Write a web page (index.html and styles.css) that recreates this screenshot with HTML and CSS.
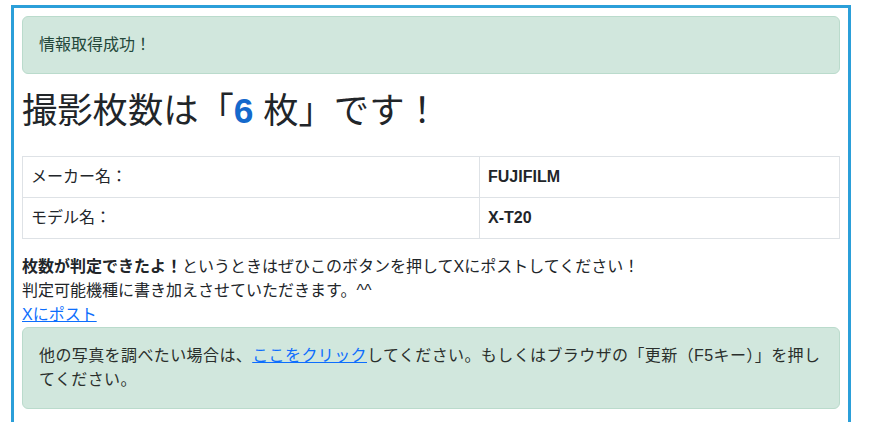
FILE: index.html
```html
<!DOCTYPE html>
<html lang="ja">
<head>
<meta charset="utf-8">
<title>撮影枚数</title>
<link rel="stylesheet" href="styles.css">
</head>
<body>
<div class="frame">
  <div class="alert alert-top">情報取得成功！</div>
  <h1 class="title">撮影枚数は「<span class="count">6</span> 枚」です！</h1>
  <table class="info">
    <tr><td class="label">メーカー名：</td><td class="value">FUJIFILM</td></tr>
    <tr><td class="label">モデル名：</td><td class="value">X-T20</td></tr>
  </table>
  <p class="note"><b>枚数が判定できたよ！</b>というときはぜひこのボタンを押してXにポストしてください！<br>判定可能機種に書き加えさせていただきます。^^<br><a href="#" class="link">Xにポスト</a></p>
  <div class="alert alert-bottom">他の写真を調べたい場合は、<a href="#" class="link">ここをクリック</a>してください。もしくはブラウザの「更新（F5キー）」を押してください。</div>
</div>
</body>
</html>
```
FILE: styles.css
```css
html, body {
  margin: 0;
  padding: 0;
  background: #fff;
}
body {
  font-family: "Liberation Sans", "Noto Sans CJK JP", sans-serif;
  font-size: 16px;
  line-height: 24px;
  color: #212529;
}
.frame {
  box-sizing: border-box;
  width: 840px;
  min-height: 440px;
  margin: 5px 0 0 11px;
  border: 3px solid #2b9fd9;
  padding: 8px;
}
.alert {
  background: #d1e7dd;
  border: 1px solid #badbcc;
  border-radius: 6px;
  padding: 16px;
}
.alert-top {
  color: #24473a;
  margin-bottom: 16px;
}
.alert-bottom {
  color: #2a2f2c;
  letter-spacing: 0.4px;
}
.title {
  margin: 0 0 24px 0;
  font-size: 35.3px;
  line-height: 42.4px;
  font-weight: 400;
  color: #212529;
}
.count {
  color: #1469cc;
  font-weight: 700;
}
.info {
  width: 100%;
  border-collapse: collapse;
  margin-bottom: 16px;
}
.info td {
  border: 1px solid #dee2e6;
  padding: 8px;
  line-height: 24px;
}
.info .label {
  width: 440px;
}
.info .value {
  font-weight: 700;
}
.note {
  margin: 0;
}
.link {
  color: #0d6efd;
  text-decoration: underline;
}
```
